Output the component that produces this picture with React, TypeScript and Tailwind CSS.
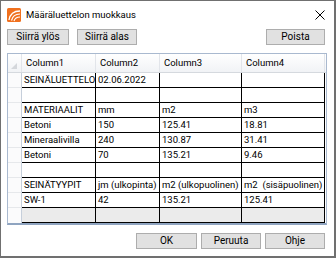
import React from 'react';

const rows: string[][] = [
  ['SEINÄLUETTELO', '02.06.2022', '', ''],
  ['', '', '', ''],
  ['MATERIAALIT', 'mm', 'm2', 'm3'],
  ['Betoni', '150', '125.41', '18.81'],
  ['Mineraalivilla', '240', '130.87', '31.41'],
  ['Betoni', '70', '135.21', '9.46'],
  ['', '', '', ''],
  ['SEINÄTYYPIT', 'jm (ulkopinta)', 'm2 (ulkopuolinen)', 'm2\u00a0\u00a0(sisäpuolinen)'],
  ['SW-1', '42', '135.21', '125.41'],
];

function Btn({ label, w = 'w-[62px]' }: { label: string; w?: string }) {
  return (
    <button className={`${w} h-[16px] border border-[#adadad] bg-[#e1e1e1] text-[10px] leading-none text-black flex items-center justify-center`}>
      {label}
    </button>
  );
}

function AppIcon() {
  return (
    <svg width="14" height="14" viewBox="0 0 14 14">
      <rect x="0" y="0" width="14" height="14" rx="1.5" fill="#f0701e" />
      <path d="M2 12 C3 6 7 3 13 3" stroke="#fff" strokeWidth="1.3" fill="none" />
      <path d="M4.5 12.5 C5.5 8 8.5 6 13 6" stroke="#fff" strokeWidth="1.2" fill="none" />
      <path d="M7 13 C8 10 10 9 13 9" stroke="#fff" strokeWidth="1.1" fill="none" />
    </svg>
  );
}

export default function App() {
  const cols = 'grid grid-cols-[14px_74px_64px_82px_83px]';
  return (
    <div className="w-[336px] h-[258px] bg-white border-l border-t border-r-2 border-b-2 border-[#707070] flex flex-col text-black font-['Roboto',sans-serif]">
      {/* title bar */}
      <div className="h-[28px] flex items-center pl-[6px] pr-[9px] shrink-0">
        <AppIcon />
        <span className="ml-[5px] text-[9.5px]">Määräluettelon muokkaus</span>
        <svg className="ml-auto" width="10" height="10" viewBox="0 0 10 10">
          <path d="M0.5 0.5 L9.5 9.5 M9.5 0.5 L0.5 9.5" stroke="#000" strokeWidth="1" />
        </svg>
      </div>

      {/* top buttons */}
      <div className="flex items-center px-[6px] gap-[8px]">
        <Btn label="Siirrä ylös" />
        <Btn label="Siirrä alas" w="w-[60px]" />
        <div className="ml-auto mr-[3px]">
          <Btn label="Poista" w="w-[59px]" />
        </div>
      </div>

      {/* data grid */}
      <div className="mx-[6px] mr-[7px] mt-[8px] h-[172px] border border-[#a9b9cf] border-b-2 border-b-[#8fa4c0] bg-white text-[9.5px] leading-none overflow-hidden">
        <div className={`${cols} h-[19px] bg-gradient-to-b from-white to-[#f1f3f6] border-b border-[#d5d9de]`}>
          <div className="border-r border-[#e2e5ea] relative">
            <svg className="absolute left-[3px] bottom-[3px]" width="6" height="6" viewBox="0 0 6 6">
              <path d="M6 0 L6 6 L0 6 Z" fill="#d4d7db" />
            </svg>
          </div>
          {['Column1', 'Column2', 'Column3', 'Column4'].map((c) => (
            <div key={c} className="border-r border-[#e2e5ea] flex items-center pl-[4px]">
              {c}
            </div>
          ))}
        </div>
        {rows.map((r, i) => (
          <div key={i} className={`${cols} h-[15px]`}>
            <div className="bg-[#fbfbfc] border-r border-[#c6cfdb] border-b border-b-[#e6e8eb]" />
            {r.map((c, j) => (
              <div key={j} className="border-r border-b border-black flex items-center pl-[2px] whitespace-nowrap overflow-hidden">
                {c}
              </div>
            ))}
          </div>
        ))}
        <div className={`${cols} h-[15px]`}>
          <div className="bg-[#fbfbfc] border-r border-[#c6cfdb]" />
          {[0, 1, 2, 3].map((j) => (
            <div key={j} className="bg-[#ebebeb] border-r border-b border-black" />
          ))}
        </div>
      </div>

      {/* bottom buttons */}
      <div className="flex justify-end gap-[4px] px-[6px] mr-[3px] mt-[8px]">
        <Btn label="OK" w="w-[61px]" />
        <Btn label="Peruuta" w="w-[60px]" />
        <Btn label="Ohje" w="w-[60px]" />
      </div>
    </div>
  );
}
